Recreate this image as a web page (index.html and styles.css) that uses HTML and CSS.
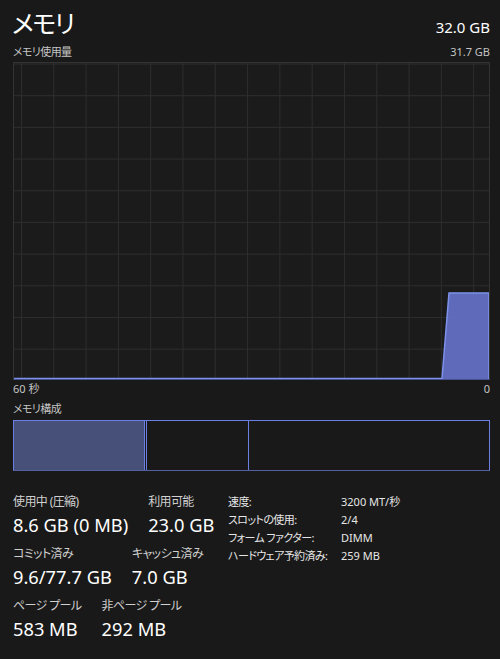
FILE: index.html
```html
<!DOCTYPE html>
<html lang="ja">
<head>
  <meta charset="UTF-8" />
  <meta name="viewport" content="width=device-width, initial-scale=1.0" />
  <title>メモリ</title>
  <link rel="stylesheet" href="styles.css">
</head>
<body>
  <div class="page">
    <div class="head">
      <h1>メモリ</h1>
      <span class="total">32.0 GB</span>
    </div>

    <div class="caption">
      <span class="jp">メモリ使用量</span>
      <span>31.7 GB</span>
    </div>

    <div class="graph">
      <svg viewBox="0 0 475 316" preserveAspectRatio="none">
        <polygon points="428,316 435,230 475,230 475,316" fill="#6572c8" fill-opacity="0.92" />
        <polyline points="0,315.5 428,315.5 435,230 475,230 475,316" fill="none" stroke="#7e92ec" stroke-width="1.5" />
      </svg>
    </div>

    <div class="axis">
      <span>60 秒</span>
      <span>0</span>
    </div>

    <div class="caption comp-title"><span class="jp">メモリ構成</span></div>

    <div class="bar">
      <div class="seg seg-use"></div>
      <div class="seg seg-mod"></div>
      <div class="seg seg-stand"></div>
      <div class="seg seg-free"></div>
    </div>

    <div class="stats">
      <div class="blocks">
        <div class="row">
          <div class="stat">
            <div class="label">使用中 (圧縮)</div>
            <div class="value">8.6 GB (0 MB)</div>
          </div>
          <div class="stat">
            <div class="label">利用可能</div>
            <div class="value">23.0 GB</div>
          </div>
        </div>
        <div class="row">
          <div class="stat">
            <div class="label">コミット済み</div>
            <div class="value">9.6/77.7 GB</div>
          </div>
          <div class="stat">
            <div class="label">キャッシュ済み</div>
            <div class="value">7.0 GB</div>
          </div>
        </div>
        <div class="row">
          <div class="stat">
            <div class="label">ページ プール</div>
            <div class="value">583 MB</div>
          </div>
          <div class="stat">
            <div class="label">非ページ プール</div>
            <div class="value">292 MB</div>
          </div>
        </div>
      </div>

      <div class="info">
        <span class="jp">速度:</span><span>3200 MT/秒</span>
        <span class="jp">スロットの使用:</span><span>2/4</span>
        <span class="jp">フォーム ファクター:</span><span>DIMM</span>
        <span class="jp">ハードウェア予約済み:</span><span>259 MB</span>
      </div>
    </div>
  </div>
</body>
</html>
```

FILE: styles.css
```css
* {
  margin: 0;
  padding: 0;
  box-sizing: border-box;
}

body {
  font-family: 'Noto Sans', 'Noto Sans CJK JP', sans-serif;
  font-feature-settings: 'palt';
  background: #191919;
  color: #fff;
}

.page {
  width: 500px;
  height: 659px;
  padding: 4px 10px 0 13px;
}

.jp {
  letter-spacing: -0.6px;
}

.head {
  display: flex;
  justify-content: space-between;
  align-items: baseline;
  height: 40px;
}

h1 {
  font-size: 25px;
  font-weight: normal;
  line-height: 38px;
  letter-spacing: -1.5px;
  margin-left: -1px;
}

.total {
  font-size: 15px;
}

.caption {
  display: flex;
  justify-content: space-between;
  font-size: 11px;
  line-height: 16px;
  color: #c4c4c4;
}

.graph {
  margin-top: 2px;
  height: 318px;
  border: 1px solid #333;
  border-bottom-color: #45528f;
  background-color: #1b1b1b;
  background-image:
    linear-gradient(to right, #2d2d2d 1px, transparent 1px),
    linear-gradient(to bottom, #2d2d2d 1px, transparent 1px);
  background-size: 32.3px 100%, 100% 31.7px;
  background-position: 7px 0, 0 0.5px;
}

.graph svg {
  display: block;
  width: 100%;
  height: 100%;
}

.axis {
  display: flex;
  justify-content: space-between;
  font-size: 11px;
  line-height: 18px;
  color: #c4c4c4;
}

.comp-title {
  line-height: 22px;
}

.bar {
  display: flex;
  height: 51px;
  border: 1px solid #6b7fe3;
  border-bottom-color: #53609f;
}

.seg {
  border-right: 1px solid #6b7fe3;
}

.seg-use {
  width: 131px;
  background: #465079;
}

.seg-mod {
  width: 2px;
}

.seg-stand {
  width: 102px;
}

.seg-free {
  flex: 1;
  border-right: none;
}

.stats {
  display: flex;
  align-items: flex-start;
  padding-top: 22px;
}

.blocks {
  width: 215px;
  display: flex;
  flex-direction: column;
  gap: 7px;
}

.row {
  display: flex;
  gap: 20px;
}

.label {
  font-size: 12px;
  line-height: 18px;
  letter-spacing: -0.6px;
  color: #d0d0d0;
}

.value {
  font-size: 18.3px;
  line-height: 26px;
  margin-top: 1px;
}

.info {
  display: grid;
  grid-template-columns: 113px auto;
  font-size: 11px;
  line-height: 18px;
  color: #e6e6e6;
}
```
